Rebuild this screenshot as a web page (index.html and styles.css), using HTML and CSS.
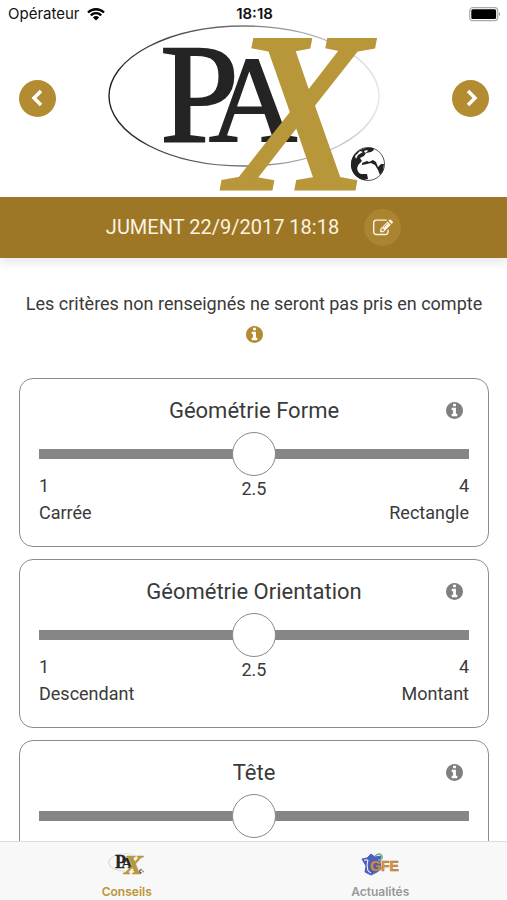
FILE: index.html
```html
<!DOCTYPE html>
<html lang="fr">
<head>
    <meta charset="UTF-8">
    <meta name="viewport" content="width=device-width, initial-scale=1.0">
    <title>PAX - Conseils</title>
    <link rel="stylesheet" href="styles.css">
</head>
<body>
    <!-- Shared icons -->
    <svg class="sprite" aria-hidden="true">
        <symbol id="icon-info" viewBox="128 128 1536 1536">
            <path d="M1152 1376v-160q0-14-9-23t-23-9h-96v-512q0-14-9-23t-23-9h-320q-14 0-23 9t-9 23v160q0 14 9 23t23 9h96v320h-96q-14 0-23 9t-9 23v160q0 14 9 23t23 9h448q14 0 23-9t9-23zm-128-896v-160q0-14-9-23t-23-9h-192q-14 0-23 9t-9 23v160q0 14 9 23t23 9h192q14 0 23-9t9-23zm640 416q0 209-103 385.5t-279.5 279.5-385.5 103-385.5-103-279.5-279.5-103-385.5 103-385.5 279.5-279.5 385.5-103 385.5 103 279.5 279.5 103 385.5z"/>
        </symbol>
        <symbol id="pax-logo" class="pax" viewBox="104 24 300 168">
            <linearGradient id="ring" x1="0" x2="1" y1="0" y2="0">
                <stop offset="0" stop-color="#222"/>
                <stop offset="0.5" stop-color="#777"/>
                <stop offset="1" stop-color="#e4e4e4"/>
            </linearGradient>
            <ellipse cx="244" cy="96" rx="135" ry="70" fill="none" stroke="url(#ring)" stroke-width="1.4"/>
            <text class="logo-dark" x="160" y="142" font-size="142">P</text>
            <text class="logo-dark" x="209" y="141" font-size="122">A</text>
            <text class="logo-gold" x="230" y="188" font-size="224">X</text>
            <circle cx="368" cy="164" r="16.5" fill="#fff" stroke="#555" stroke-width="1"/>
            <path fill="#222" d="M373 148C362 146 352 153 351 163c-1 8 5 16 13 17l4-1-1-5-6 0c-4-2-5-6-2-10l3-3-2-3 4-2 2-3 5-1 3-2z"/>
            <path fill="#222" d="M362 163l5-2 2 1 4-2 3 2 2 5 3-3 3 0-1 7-3 4-2-5-3-5-4-2-4 1-5 1z"/>
            <path fill="#fff" d="M355 156l5-5 3 1-5 3-2 4zM364 151l3-1 1 1-3 2z"/>
        </symbol>
    </svg>

    <div class="app">
        <header class="header">
            <div class="status">
                <span class="carrier">
                    Opérateur
                    <svg class="wifi" viewBox="0 0 18 13" aria-hidden="true">
                        <path d="M1 4.500a11.500 11.500 0 0 1 16 0M3.800 7.300a7.500 7.500 0 0 1 10.400 0" fill="none" stroke="#000" stroke-width="2.300"/>
                        <path d="M9 12.600L5.900 9.500a4.500 4.500 0 0 1 6.200 0z"/>
                    </svg>
                </span>
                <time class="clock">18:18</time>
                <svg class="battery" viewBox="0 0 32 15" aria-hidden="true">
                    <rect x="0.700" y="0.700" width="28" height="13" rx="3" fill="#fff" stroke="#aaa" stroke-width="1.200"/>
                    <rect x="2.300" y="2.300" width="24.800" height="9.800" rx="1.500"/>
                    <path d="M30 5q2 2 0 4.500z" fill="#888"/>
                </svg>
            </div>
            <div class="brand">
                <button class="round" type="button" aria-label="Précédent">
                    <svg viewBox="0 0 20 20" aria-hidden="true"><path d="M13 3L6 10l7 7"/></svg>
                </button>
                <svg class="logo" role="img" aria-label="PAX"><use href="#pax-logo"/></svg>
                <button class="round" type="button" aria-label="Suivant">
                    <svg viewBox="0 0 20 20" aria-hidden="true"><path d="M7 3l7 7-7 7"/></svg>
                </button>
            </div>
        </header>

        <div class="band">
            <h1>JUMENT 22/9/2017 18:18</h1>
            <button class="round edit" type="button" aria-label="Modifier">
                <svg viewBox="0 0 1792 1792" aria-hidden="true">
                    <path d="M888 1184l116-116-152-152-116 116v56h96v96h56zm440-720q-16-16-33 1l-350 350q-17 17-1 33t33-1l350-350q17-17 1-33zm80 594v190q0 119-84.500 203.500t-203.500 84.500h-832q-119 0-203.500-84.500t-84.500-203.500v-832q0-119 84.500-203.500t203.500-84.500h832q63 0 117 25 15 7 18 23 3 17-9 29l-49 49q-14 14-32 8-23-6-45-6h-832q-66 0-113 47t-47 113v832q0 66 47 113t113 47h832q66 0 113-47t47-113v-126q0-13 9-22l64-64q15-15 35-7t20 29zm-96-738l288 288-672 672h-288v-288zm444 132l-92 92-288-288 92-92q28-28 68-28t68 28l152 152q28 28 28 68t-28 68z"/>
                </svg>
            </button>
        </div>

        <main class="content">
            <div class="notice">
                <p>Les critères non renseignés ne seront pas pris en compte</p>
                <button class="info gold" type="button" aria-label="Informations"><svg><use href="#icon-info"/></svg></button>
            </div>

            <section class="card">
                <div class="card-head">
                    <h2><label for="forme">Géométrie Forme</label></h2>
                    <button class="info" type="button" aria-label="Aide Géométrie Forme"><svg><use href="#icon-info"/></svg></button>
                </div>
                <input class="slider" id="forme" type="range" min="1" max="4" step="0.5" value="2.5">
                <div class="scale">
                    <div>1<br>Carrée</div>
                    <output for="forme">2.5</output>
                    <div class="max">4<br>Rectangle</div>
                </div>
            </section>

            <section class="card">
                <div class="card-head">
                    <h2><label for="orientation">Géométrie Orientation</label></h2>
                    <button class="info" type="button" aria-label="Aide Géométrie Orientation"><svg><use href="#icon-info"/></svg></button>
                </div>
                <input class="slider" id="orientation" type="range" min="1" max="4" step="0.5" value="2.5">
                <div class="scale">
                    <div>1<br>Descendant</div>
                    <output for="orientation">2.5</output>
                    <div class="max">4<br>Montant</div>
                </div>
            </section>

            <section class="card">
                <div class="card-head">
                    <h2><label for="tete">Tête</label></h2>
                    <button class="info" type="button" aria-label="Aide Tête"><svg><use href="#icon-info"/></svg></button>
                </div>
                <input class="slider" id="tete" type="range" min="1" max="4" step="0.5" value="2.5">
                <div class="scale">
                    <div>1</div>
                    <output for="tete">2.5</output>
                    <div class="max">4</div>
                </div>
            </section>
        </main>

        <nav class="tabs">
            <a class="tab active" href="#conseils">
                <svg class="tab-pax" aria-hidden="true"><use href="#pax-logo"/></svg>
                Conseils
            </a>
            <a class="tab" href="#actualites">
                <svg class="tab-gfe" viewBox="0 0 38 24" aria-hidden="true">
                    <path d="M1 7l5-1 4-4 4 3 6-1-1 6 1 7-4 3-6 3-6-3 1-6z" fill="#4a5fc0" stroke="#4a5fc0" stroke-linejoin="round"/>
                    <path d="M3 8l4 0-1 5 1 6 3 2" fill="none" stroke="#fff" stroke-width="1"/>
                    <path d="M14 4q5-4 7 0 1 4-4 4" fill="none" stroke="#69b58d" stroke-width="1.500"/>
                    <text class="gfe" x="9" y="19">GFE</text>
                </svg>
                Actualités
            </a>
        </nav>
    </div>

    <script>
        // Show the current value under each slider
        document.querySelectorAll('.slider').forEach((slider) => {
            const output = document.querySelector(`output[for="${slider.id}"]`);
            slider.addEventListener('input', () => {
                output.textContent = slider.value;
            });
        });
    </script>
</body>
</html>
```
FILE: styles.css
```css
* {
    box-sizing: border-box;
}

body {
    margin: 0;
    font-family: Roboto, sans-serif;
    font-size: 18px;
    line-height: 27px;
    color: #3a3a3a;
    background-color: #fff;
}

h1, h2, p {
    margin: 0;
    font-weight: 400;
}

button {
    padding: 0;
    border: 0;
    cursor: pointer;
}

.sprite {
    position: absolute;
    width: 0;
    height: 0;
}

.app {
    display: flex;
    flex-direction: column;
    height: 100vh;
}

/* Header */
.status {
    display: grid;
    grid-template-columns: 1fr auto 1fr;
    align-items: center;
    height: 24px;
    padding: 4px 6px 0 8px;
    font-family: Inter, sans-serif;
    font-size: 15px;
    line-height: 20px;
    color: #111;
}

.carrier {
    display: flex;
    align-items: center;
    gap: 7px;
}

.wifi {
    width: 18px;
    height: 13px;
}

.clock {
    font-weight: 600;
}

.battery {
    width: 32px;
    height: 15px;
    justify-self: end;
}

.brand {
    display: flex;
    align-items: center;
    justify-content: space-between;
    padding: 0 18px 5px 19px;
}

.brand .round {
    margin-bottom: 20px;
}

.logo {
    width: 300px;
    height: 168px;
}

.pax,
.logo,
.tab-pax {
    overflow: visible;
}

.logo-dark,
.logo-gold {
    font-family: "Liberation Serif", serif;
    fill: #242424;
    stroke: #242424;
    stroke-width: 2;
}

.logo-gold {
    font-style: italic;
    fill: #b8963a;
    stroke: #b8963a;
    stroke-width: 5;
}

.round {
    display: flex;
    flex: none;
    align-items: center;
    justify-content: center;
    width: 37px;
    height: 37px;
    border-radius: 50%;
    background-color: #b38b30;
}

.round svg {
    width: 20px;
    height: 20px;
    fill: none;
    stroke: #fff;
    stroke-width: 3.5;
}

.band {
    position: relative;
    display: flex;
    flex: none;
    align-items: center;
    justify-content: center;
    gap: 25px;
    height: 61px;
    background-color: #9d7726;
    box-shadow: 0 6px 8px rgba(0, 0, 0, 0.08);
}

.band h1 {
    font-size: 20px;
    color: #fcf3e0;
}

.edit {
    background-color: #aa8430;
}

.edit svg {
    fill: #fcf3e0;
    stroke: none;
}

/* Criteria list */
.content {
    flex: 1;
    min-height: 0;
    padding: 31px 18px 12px 19px;
    overflow-y: auto;
    scrollbar-width: none;
}

.notice {
    display: flex;
    flex-direction: column;
    align-items: center;
    gap: 7px;
    margin-bottom: 35px;
    line-height: 30px;
    text-align: center;
}

.info {
    width: 17px;
    height: 17px;
    background: none;
    color: #808080;
}

.info svg {
    display: block;
    width: 17px;
    height: 17px;
    fill: currentColor;
}

.gold {
    color: #b38b30;
}

.card {
    min-height: 169px;
    margin-bottom: 12px;
    padding: 16px 19px 18px;
    border: 1px solid #8c8c8c;
    border-radius: 14px;
}

.card-head {
    display: grid;
    grid-template-columns: 1fr auto 1fr;
    align-items: center;
    height: 30px;
}

.card-head h2 {
    grid-column: 2;
    font-size: 22px;
}

.card-head .info {
    justify-self: end;
    margin-right: 6px;
}

.slider {
    display: block;
    width: 100%;
    height: 34px;
    margin: 12px 0 1px;
    appearance: none;
    background: linear-gradient(#868686, #868686) center / 100% 10px no-repeat;
}

.slider::-webkit-slider-thumb {
    width: 44px;
    height: 44px;
    appearance: none;
    border: 1px solid #888;
    border-radius: 50%;
    background-color: #fff;
}

.scale {
    display: grid;
    grid-template-columns: 1fr auto 1fr;
}

.scale output {
    padding-top: 3px;
}

.scale .max {
    text-align: right;
}

/* Tab bar */
.tabs {
    display: flex;
    flex: none;
    height: 59px;
    border-top: 1px solid #dcdcdc;
    background-color: #f8f8f8;
}

.tab {
    display: flex;
    flex: 1;
    flex-direction: column;
    align-items: center;
    justify-content: space-between;
    padding-top: 10px;
    font-family: Inter, sans-serif;
    font-size: 12px;
    font-weight: 600;
    line-height: 16px;
    color: #999;
    text-decoration: none;
}

.active {
    color: #bd9436;
}

.tab-pax,
.tab-gfe {
    width: 38px;
    height: 24px;
}

.gfe {
    font-family: "Liberation Sans", sans-serif;
    font-size: 14px;
    font-weight: 700;
    fill: #ec9534;
    stroke: #9a7040;
    stroke-width: 0.5;
}
```
